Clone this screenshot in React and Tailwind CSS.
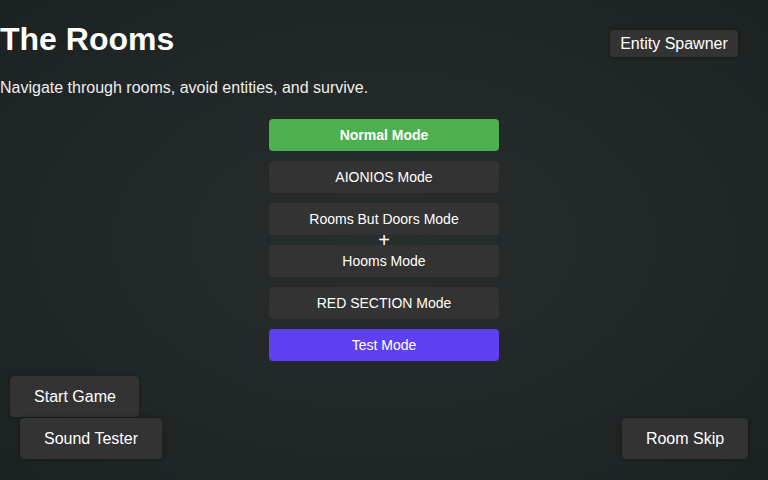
import React from "react";

export default function App() {
  const modes = [
    { label: "Normal Mode", cls: "bg-[#4caf50] font-bold" },
    { label: "AIONIOS Mode", cls: "bg-[#333333]" },
    { label: "Rooms But Doors Mode", cls: "bg-[#333333]" },
    { label: "Hooms Mode", cls: "bg-[#333333]" },
    { label: "RED SECTION Mode", cls: "bg-[#333333]" },
    { label: "Test Mode", cls: "bg-[#5e40f2]" },
  ];
  return (
    <div
      className="relative flex h-[480px] w-full flex-col overflow-hidden bg-[radial-gradient(ellipse_at_center,#282d2d_0%,#1c2222_100%)] text-white"
      style={{ fontFamily: '"Liberation Sans", Arial, sans-serif' }}
    >
      <div className="flex items-start justify-between">
        <h1 className="mt-[21px] text-[32px] font-bold leading-[37px]">The Rooms</h1>
        <button className="mr-[30px] mt-[30px] flex h-[27px] w-[128px] items-center justify-center rounded-[4px] bg-[#333333] text-[16px] shadow-[0_0_4px_rgba(0,0,0,0.35)]">
          Entity Spawner
        </button>
      </div>
      <p className="mt-[21px] text-[16px] leading-[18px] text-[#eeeeee]">
        Navigate through rooms, avoid entities, and survive.
      </p>
      <div className="mt-[22px] flex flex-col items-center gap-[10px]">
        {modes.map((m) => (
          <button
            key={m.label}
            className={`flex h-[32px] w-[230px] items-center justify-center rounded-[4px] text-[14px] ${m.cls}`}
          >
            {m.label}
          </button>
        ))}
      </div>
      <div className="mt-auto flex flex-col pb-[21px]">
        <button className="ml-[10px] flex h-[41px] w-[129px] items-center justify-center self-start rounded-[4px] bg-[#333333] pl-[1px] text-[16px] shadow-[0_0_4px_rgba(0,0,0,0.35)]">
          Start Game
        </button>
        <div className="mt-[1px] flex items-center justify-between">
          <button className="ml-[20px] flex h-[41px] w-[142px] items-center justify-center rounded-[4px] bg-[#333333] text-[16px] shadow-[0_0_4px_rgba(0,0,0,0.35)]">
            Sound Tester
          </button>
          <button className="mr-[20px] flex h-[41px] w-[126px] items-center justify-center rounded-[4px] bg-[#333333] text-[16px] shadow-[0_0_4px_rgba(0,0,0,0.35)]">
            Room Skip
          </button>
        </div>
      </div>
      <div className="pointer-events-none absolute left-1/2 top-1/2 -translate-x-1/2 -translate-y-1/2 text-[20px] leading-[20px]">
        +
      </div>
    </div>
  );
}
